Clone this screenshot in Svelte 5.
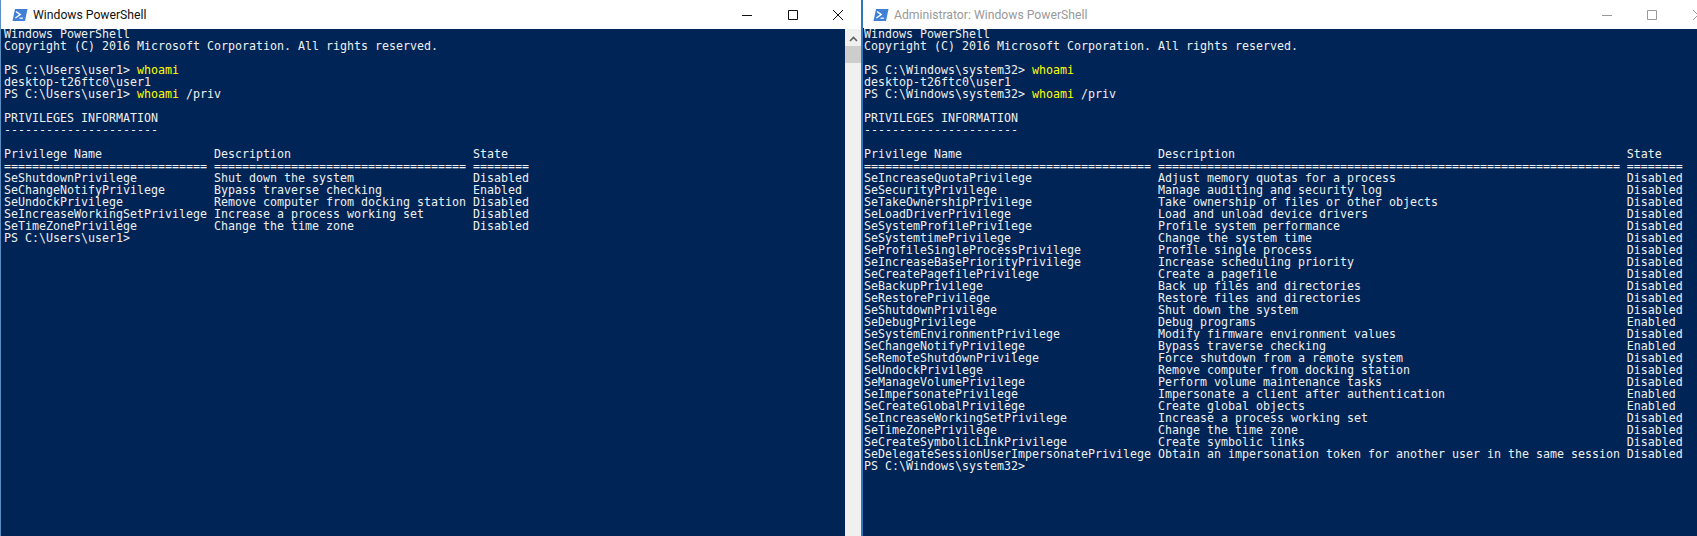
<script>
	const line = (ch, n) => ch.repeat(n);

	function table(rows, nameW, descW) {
		const head = 'Privilege Name'.padEnd(nameW + 1) + 'Description'.padEnd(descW + 1) + 'State';
		const rule = line('=', nameW) + ' ' + line('=', descW) + ' ' + line('=', 8);
		const body = rows.map(([n, d, s]) => n.padEnd(nameW + 1) + d.padEnd(descW + 1) + s);
		return [head, rule, ...body];
	}

	const userRows = [
		['SeShutdownPrivilege', 'Shut down the system', 'Disabled'],
		['SeChangeNotifyPrivilege', 'Bypass traverse checking', 'Enabled'],
		['SeUndockPrivilege', 'Remove computer from docking station', 'Disabled'],
		['SeIncreaseWorkingSetPrivilege', 'Increase a process working set', 'Disabled'],
		['SeTimeZonePrivilege', 'Change the time zone', 'Disabled']
	];

	const adminRows = [
		['SeIncreaseQuotaPrivilege', 'Adjust memory quotas for a process', 'Disabled'],
		['SeSecurityPrivilege', 'Manage auditing and security log', 'Disabled'],
		['SeTakeOwnershipPrivilege', 'Take ownership of files or other objects', 'Disabled'],
		['SeLoadDriverPrivilege', 'Load and unload device drivers', 'Disabled'],
		['SeSystemProfilePrivilege', 'Profile system performance', 'Disabled'],
		['SeSystemtimePrivilege', 'Change the system time', 'Disabled'],
		['SeProfileSingleProcessPrivilege', 'Profile single process', 'Disabled'],
		['SeIncreaseBasePriorityPrivilege', 'Increase scheduling priority', 'Disabled'],
		['SeCreatePagefilePrivilege', 'Create a pagefile', 'Disabled'],
		['SeBackupPrivilege', 'Back up files and directories', 'Disabled'],
		['SeRestorePrivilege', 'Restore files and directories', 'Disabled'],
		['SeShutdownPrivilege', 'Shut down the system', 'Disabled'],
		['SeDebugPrivilege', 'Debug programs', 'Enabled'],
		['SeSystemEnvironmentPrivilege', 'Modify firmware environment values', 'Disabled'],
		['SeChangeNotifyPrivilege', 'Bypass traverse checking', 'Enabled'],
		['SeRemoteShutdownPrivilege', 'Force shutdown from a remote system', 'Disabled'],
		['SeUndockPrivilege', 'Remove computer from docking station', 'Disabled'],
		['SeManageVolumePrivilege', 'Perform volume maintenance tasks', 'Disabled'],
		['SeImpersonatePrivilege', 'Impersonate a client after authentication', 'Enabled'],
		['SeCreateGlobalPrivilege', 'Create global objects', 'Enabled'],
		['SeIncreaseWorkingSetPrivilege', 'Increase a process working set', 'Disabled'],
		['SeTimeZonePrivilege', 'Change the time zone', 'Disabled'],
		['SeCreateSymbolicLinkPrivilege', 'Create symbolic links', 'Disabled'],
		['SeDelegateSessionUserImpersonatePrivilege', 'Obtain an impersonation token for another user in the same session', 'Disabled']
	];

	const windows = [
		{
			title: 'Windows PowerShell',
			active: true,
			prompt: 'PS C:\\Users\\user1>',
			rows: table(userRows, 29, 36)
		},
		{
			title: 'Administrator: Windows PowerShell',
			active: false,
			prompt: 'PS C:\\Windows\\system32>',
			rows: table(adminRows, 41, 66)
		}
	];
</script>

{#each windows as win}
	<section class="window" class:active={win.active}>
		<header class="titlebar">
			<svg class="app-icon" viewBox="0 0 16 14" width="16" height="14" aria-hidden="true">
				<path d="M3 1 H15.5 L13 13 H0.5 Z" fill="#3f7fd6" />
				<path d="M4 3.5 L8.2 6.6 L3.4 10" fill="none" stroke="#fff" stroke-width="1.4" />
				<path d="M7.5 10.2 H11" stroke="#fff" stroke-width="1.2" />
			</svg>
			<span class="title">{win.title}</span>
			<div class="controls">
				<span class="control">
					<svg viewBox="0 0 10 10" width="10" height="10"><path d="M0 5.5 H10" /></svg>
				</span>
				<span class="control">
					<svg viewBox="0 0 10 10" width="10" height="10"><path d="M.5 .5 H9.5 V9.5 H.5 Z" /></svg>
				</span>
				<span class="control">
					<svg viewBox="0 0 10 10" width="10" height="10"><path d="M0 0 L10 10 M10 0 L0 10" /></svg>
				</span>
			</div>
		</header>
		<div class="body">
			<div class="console">
				<div class="ln">Windows PowerShell</div>
				<div class="ln">Copyright (C) 2016 Microsoft Corporation. All rights reserved.</div>
				<div class="ln"></div>
				<div class="ln"><span>{win.prompt + ' '}</span><span class="cmd">whoami</span></div>
				<div class="ln">desktop-t26ftc0\user1</div>
				<div class="ln"><span>{win.prompt + ' '}</span><span class="cmd">whoami</span><span>{' /priv'}</span></div>
				<div class="ln"></div>
				<div class="ln">PRIVILEGES INFORMATION</div>
				<div class="ln">----------------------</div>
				<div class="ln"></div>
				{#each win.rows as row}
					<div class="ln">{row}</div>
				{/each}
				<div class="ln">{win.prompt}</div>
			</div>
			{#if win.active}
				<div class="scrollbar">
					<svg class="arrow" viewBox="0 0 9 6" width="9" height="6"><path d="M1 5 L4.5 1.5 L8 5" /></svg>
					<div class="thumb"></div>
				</div>
			{/if}
		</div>
	</section>
{/each}

<style>
	:global(body) {
		margin: 0;
		background: #f0f0f0;
		overflow: hidden;
	}

	:global(#app) {
		display: flex;
		width: 1697px;
		height: 536px;
		overflow: hidden;
	}

	.window {
		display: flex;
		flex-direction: column;
		flex: none;
		width: 861px;
		height: 536px;
		box-sizing: border-box;
		border-left: 1px solid #5a8fc4;
		background: #fff;
		overflow: hidden;
	}

	.window:not(.active) {
		width: 836px;
		border-left: 2px solid #2a78c4;
	}

	.titlebar {
		display: flex;
		align-items: center;
		flex: none;
		height: 29px;
		padding-left: 11px;
		background: #fff;
		font: 12.2px Roboto, "Open Sans", sans-serif;
		color: #111;
	}

	.window:not(.active) .titlebar {
		padding-left: 10px;
		color: #999;
	}

	.app-icon {
		margin-right: 5px;
	}

	.title {
		flex: 1;
		min-width: 0;
	}

	.controls {
		display: flex;
		flex: none;
		width: 136.5px;
	}

	.window:not(.active) .controls {
		margin-right: -23.5px;
	}

	.control {
		display: flex;
		align-items: center;
		justify-content: center;
		width: 45.5px;
		height: 29px;
	}

	.control svg {
		fill: none;
		stroke: #111;
		stroke-width: 1;
	}

	.window:not(.active) .control svg {
		stroke: #999;
	}

	.body {
		display: flex;
		flex: 1;
		min-height: 0;
		background: #012456;
	}

	.console {
		flex: 1;
		margin-top: -1px;
		padding-left: 3px;
		overflow: hidden;
		font: 11.63px/12px "DejaVu Sans Mono", monospace;
		color: #eef0f0;
	}

	.ln {
		height: 12px;
		white-space: pre;
	}

	.window:not(.active) .console {
		border-left: 1px solid #0a1a33;
		padding-left: 0;
	}

	.cmd {
		color: #ffff00;
	}

	.scrollbar {
		display: flex;
		flex-direction: column;
		align-items: center;
		flex: none;
		width: 16px;
		background: #f0f0f0;
	}

	.arrow {
		margin-top: 7px;
		fill: none;
		stroke: #606060;
		stroke-width: 1.6;
	}

	.thumb {
		width: 100%;
		height: 17px;
		margin-top: 4px;
		background: #cdcdcd;
	}
</style>
